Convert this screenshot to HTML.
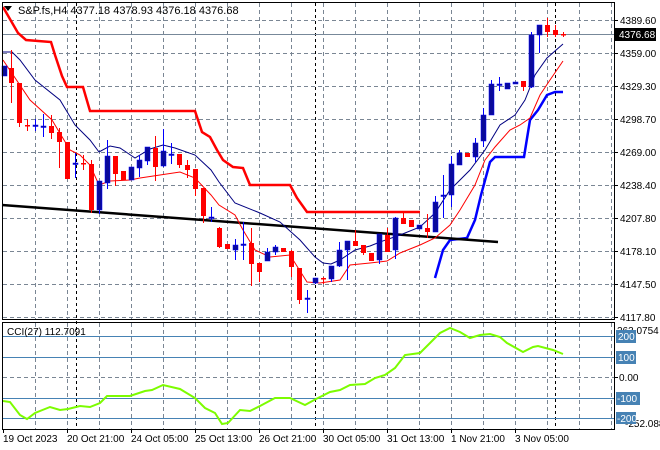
<!DOCTYPE html>
<html><head><meta charset="utf-8"><style>
html,body{margin:0;padding:0;background:#fff;width:660px;height:450px;overflow:hidden}
svg{display:block;font-family:"Liberation Sans",sans-serif}
</style></head><body>
<svg width="660" height="450" viewBox="0 0 660 450" xmlns="http://www.w3.org/2000/svg">
<rect width="660" height="450" fill="#fff"/>
<!-- grid main -->
<g stroke="#7a8694" stroke-width="1" stroke-dasharray="4,3" fill="none">
<path d="M3 20.5H614M3 53.5H614M3 86.5H614M3 119.5H614M3 152.5H614M3 185.5H614M3 218.5H614M3 251.5H614M3 284.5H614M3 317.5H614"/>
<path d="M35.5 3V319M67.5 3V319M99.5 3V319M131.5 3V319M163.5 3V319M195.5 3V319M227.5 3V319M259.5 3V319M291.5 3V319M323.5 3V319M355.5 3V319M387.5 3V319M419.5 3V319M451.5 3V319M483.5 3V319M515.5 3V319M547.5 3V319M579.5 3V319M611.5 3V319"/>
<path d="M35.5 323V429M67.5 323V429M99.5 323V429M131.5 323V429M163.5 323V429M195.5 323V429M227.5 323V429M259.5 323V429M291.5 323V429M323.5 323V429M355.5 323V429M387.5 323V429M419.5 323V429M451.5 323V429M483.5 323V429M515.5 323V429M547.5 323V429M579.5 323V429M611.5 323V429"/>
<path d="M3 377.5H614"/>
</g>
<g stroke="#000" stroke-width="1" stroke-dasharray="3,3">
<path d="M76.5 3V429M315.5 3V429M555.5 3V429"/>
</g>
<!-- CCI levels -->
<g stroke="#4682b4" stroke-width="1">
<path d="M3 336.5H614M3 357.5H614M3 398.5H614M3 418.5H614"/>
</g>
<!-- current price line -->
<path d="M3 34.5H614" stroke="#778899" stroke-width="1"/>
<!-- thick red band -->
<polyline fill="none" stroke="#ff0000" stroke-width="2.5" points="3,7 18,33 26,40 51,42 55,55 62,76 67,87 83,87 90,111 195,111 202,132 210,137 217,150 223,160 233,167 243,168 250,185 290,185 297,198 307,212 420,212"/>
<!-- thick blue band -->
<polyline fill="none" stroke="#0000ff" stroke-width="2.5" points="435,278 443,250 450,240 467,238 475,220 481,195 490,162 495,157 524,157 530,120 538,110 547,95 555,92 563,92"/>
<!-- black trendline -->
<polyline fill="none" stroke="#000" stroke-width="2.5" points="2,205 498,242"/>
<!-- navy MA -->
<polyline fill="none" stroke="#000080" stroke-width="1" points="3,52 12,52 20,60 35,80 60,100 75,125 90,140 99,152 110,146 120,148 135,158 150,149 163,145 175,148 195,155 211,170 219,182 235,203 260,213 280,222 300,240 315,257 323,263 331,264 340,260 355,250 370,246 380,242 400,235 420,227 435,213 450,190 470,170 485,150 500,125 515,115 525,100 535,75 547,58 563,44"/>
<!-- red MA -->
<polyline fill="none" stroke="#ff0000" stroke-width="1" points="3,60 30,100 52,120 70,150 80,155 90,165 99,185 110,181 130,180 140,178 160,175 180,172 195,178 211,195 219,205 235,215 243,230 255,250 270,257 290,255 307,282 320,283 340,280 350,265 370,263 387,261 400,253 420,245 435,238 450,225 460,210 475,185 485,160 495,147 510,130 520,125 530,118 540,95 550,80 563,61"/>
<!-- red wicks -->
<path fill="none" stroke="#ff0000" stroke-width="1" d="M11.5 50V103M19.5 83V127M27.5 119V131M51.5 115V139M59.5 128V168M67.5 142V179M83.5 155V170M91.5 160V213M115.5 156V186M155.5 136V181M179.5 154V168M187.5 160V178M195.5 169V196M203.5 188V223M219.5 227V248M251.5 228V286M259.5 263V282M291.5 250V277M299.5 268V304M323.5 277V284M355.5 230V246M363.5 245V255M387.5 228V252M403.5 212V224M427.5 214V238M523.5 81V91M547.5 18V37M555.5 25V37M563.5 32V37"/>
<g fill="#ff0000">
<rect x="9" y="68" width="5" height="15"/><rect x="17" y="83" width="5" height="40"/><rect x="25" y="125" width="5" height="1.5"/><rect x="49" y="126" width="5" height="7"/><rect x="57" y="132" width="5" height="10"/><rect x="65" y="142" width="5" height="37"/><rect x="81" y="163" width="5" height="1.5"/><rect x="89" y="164" width="5" height="46"/><rect x="113" y="156" width="5" height="18"/><rect x="121" y="171" width="5" height="9"/><rect x="153" y="148" width="5" height="19"/><rect x="177" y="154" width="5" height="11"/><rect x="185" y="165" width="5" height="5"/><rect x="193" y="169" width="5" height="20"/><rect x="201" y="188" width="5" height="28"/><rect x="217" y="228" width="5" height="19"/><rect x="225" y="244" width="5" height="5"/><rect x="249" y="243" width="5" height="21"/><rect x="257" y="263" width="5" height="9"/><rect x="281" y="248" width="5" height="4"/><rect x="289" y="251" width="5" height="16"/><rect x="297" y="268" width="5" height="32"/><rect x="321" y="278" width="5" height="1.5"/><rect x="353" y="241" width="5" height="5"/><rect x="361" y="245" width="5" height="8"/><rect x="369" y="253" width="5" height="8"/><rect x="385" y="235" width="5" height="17"/><rect x="401" y="218" width="5" height="6"/><rect x="409" y="220" width="5" height="7"/><rect x="425" y="228" width="5" height="4"/><rect x="465" y="153" width="5" height="4"/><rect x="521" y="81" width="5" height="6"/><rect x="545" y="25" width="5" height="7"/><rect x="553" y="30" width="5" height="5"/><rect x="561" y="34" width="5" height="1.5"/>
</g>
<!-- blue wicks -->
<path fill="none" stroke="#0000ff" stroke-width="1" d="M4.5 66V76M35.5 119V131M43.5 114V137M75.5 153V178M99.5 181V214M107.5 140V189M139.5 155V177M147.5 147V165M163.5 129V167M171.5 143V164M211.5 207V222M235.5 239V260M243.5 222V260M267.5 248V261M275.5 245V255M307.5 290V313M315.5 278V284M331.5 266V282M339.5 242V267M347.5 241V280M379.5 234V264M395.5 217V259M435.5 196V232M443.5 175V218M451.5 156V207M459.5 150V165M475.5 138V162M483.5 108V147M491.5 80V115M499.5 77V91M531.5 32V88M539.5 25V53"/>
<g fill="#0a0a9a" stroke="#0000ff" stroke-width="0.5">
<rect x="2" y="66" width="5" height="10"/><rect x="33" y="125" width="5" height="1.5"/><rect x="41" y="126" width="5" height="1.5"/><rect x="73" y="163" width="5" height="1.5"/><rect x="97" y="181" width="5" height="29"/><rect x="105" y="156" width="5" height="27"/><rect x="129" y="167" width="5" height="13"/><rect x="137" y="160" width="5" height="8"/><rect x="145" y="147" width="5" height="14"/><rect x="161" y="151" width="5" height="15"/><rect x="169" y="154" width="5" height="1.5"/><rect x="209" y="217" width="5" height="1.5"/><rect x="233" y="245" width="5" height="5"/><rect x="241" y="244" width="5" height="1.5"/><rect x="265" y="252" width="5" height="9"/><rect x="273" y="247" width="5" height="5"/><rect x="305" y="298" width="5" height="1.5"/><rect x="313" y="278" width="5" height="5"/><rect x="329" y="266" width="5" height="13"/><rect x="337" y="250" width="5" height="16"/><rect x="345" y="241" width="5" height="9"/><rect x="377" y="234" width="5" height="26"/><rect x="393" y="218" width="5" height="32"/><rect x="417" y="225" width="5" height="4"/><rect x="433" y="202" width="5" height="30"/><rect x="441" y="195" width="5" height="1.5"/><rect x="449" y="164" width="5" height="31"/><rect x="457" y="153" width="5" height="12"/><rect x="473" y="143" width="5" height="14"/><rect x="481" y="115" width="5" height="26"/><rect x="489" y="84" width="5" height="31"/><rect x="497" y="84" width="5" height="1.5"/><rect x="505" y="83" width="5" height="6"/><rect x="513" y="82" width="5" height="2"/><rect x="529" y="35" width="5" height="52"/><rect x="537" y="25" width="5" height="10"/>
</g>
<!-- CCI line -->
<polyline fill="none" stroke="#7cfc00" stroke-width="2" points="3,401 10,402 20,415 27,419 35,413 50,407 60,410 68,409 80,406 90,407 100,403 107,396 130,396 145,391 152,390 163,385 180,389 195,398 205,408 215,413 222,424 228,423 240,410 250,411 260,406 275,398 290,398 305,405 316,399 322,396 330,392 340,390 350,385 365,384 375,378 385,375 395,368 405,355 420,353 430,343 440,333 450,328 460,332 470,338 480,335 490,334 500,337 507,343 523,352 533,347 538,346 553,350 563,354"/>
<!-- frames -->
<rect x="2.5" y="2.5" width="612" height="317" fill="none" stroke="#000" stroke-width="1"/>
<rect x="2.5" y="322.5" width="612" height="107" fill="none" stroke="#000" stroke-width="1"/>
<!-- header -->
<path d="M4 6H12L8 11Z" fill="#000"/>
<text x="18" y="14" font-size="11" fill="#000">S&amp;P.fs,H4  4377.18 4378.93 4376.18 4376.68</text>
<text x="7" y="335" font-size="10" fill="#000">CCI(27) 112.7091</text>
<!-- price axis -->
<g font-size="10" fill="#000">
<path d="M614 20.5H618M614 53.5H618M614 86.5H618M614 119.5H618M614 152.5H618M614 185.5H618M614 218.5H618M614 251.5H618M614 284.5H618M614 317.5H618M614 377.5H618" stroke="#000"/>
<text x="620" y="24">4389.60</text>
<text x="620" y="57">4359.00</text>
<text x="620" y="90">4329.30</text>
<text x="620" y="123">4298.70</text>
<text x="620" y="156">4269.00</text>
<text x="620" y="189">4238.40</text>
<text x="620" y="222">4207.80</text>
<text x="620" y="255">4178.10</text>
<text x="620" y="288">4147.50</text>
<text x="620" y="321">4117.80</text>
<rect x="615" y="28" width="41" height="13" fill="#000"/>
<text x="619" y="38" fill="#fff">4376.68</text>
<text x="617" y="334">263.0754</text>
<rect x="616" y="330" width="20" height="13" fill="#4682b4"/>
<text x="618" y="340" fill="#fff">200</text>
<rect x="616" y="351" width="20" height="13" fill="#4682b4"/>
<text x="618" y="361" fill="#fff">100</text>
<text x="619" y="381">0.00</text>
<rect x="616" y="392" width="24" height="13" fill="#4682b4"/>
<text x="617" y="402" fill="#fff">-100</text>
<text x="625" y="427">-252.0883</text>
<rect x="616" y="412" width="20" height="12" fill="#4682b4"/>
<text x="617" y="422" fill="#fff">-200</text>
</g>
<!-- time axis -->
<g font-size="10" fill="#000">
<path d="M3.5 429V433M67.5 429V433M131.5 429V433M195.5 429V433M259.5 429V433M323.5 429V433M387.5 429V433M451.5 429V433M515.5 429V433" stroke="#000"/>
<text x="3" y="442">19 Oct 2023</text>
<text x="67" y="442">20 Oct 21:00</text>
<text x="131" y="442">24 Oct 05:00</text>
<text x="195" y="442">25 Oct 13:00</text>
<text x="259" y="442">26 Oct 21:00</text>
<text x="323" y="442">30 Oct 05:00</text>
<text x="387" y="442">31 Oct 13:00</text>
<text x="451" y="442">1 Nov 21:00</text>
<text x="515" y="442">3 Nov 05:00</text>
</g>
</svg>
</body></html>
